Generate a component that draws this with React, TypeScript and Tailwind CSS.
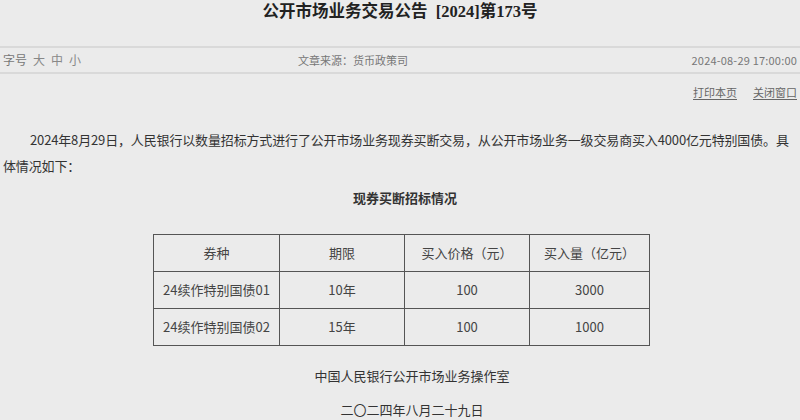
import React from "react";

const rows = [
  ["24续作特别国债01", "10年", "100", "3000"],
  ["24续作特别国债02", "15年", "100", "1000"],
];

export default function App() {
  const cell = "border border-[#555] text-center align-middle h-[37px] p-0";
  return (
    <div
      className="w-[800px] h-[420px] overflow-hidden bg-[#ebebeb] text-[#333]"
      style={{ fontFamily: '"Liberation Serif", "Noto Sans CJK SC", serif' }}
    >
      <h1 className="h-[24px] leading-[24px] text-center text-[16.5px] font-bold text-[#222]">
        公开市场业务交易公告&nbsp; [2024]第173号
      </h1>

      <div
        className="mt-[22px] h-[28px] border-y-2 border-[#d9d9d9] flex items-center px-[3px] text-[#777]"
        style={{ fontFamily: '"Noto Sans CJK SC", sans-serif' }}
      >
        <div className="w-[295px] flex gap-[6px] text-[12px] leading-[24px]">
          <span>字号</span>
          <span className="text-[#888]">大</span>
          <span className="text-[#888]">中</span>
          <span className="text-[#888]">小</span>
        </div>
        <div className="text-[11px] leading-[24px]">文章来源：货币政策司</div>
        <div className="ml-auto text-[11px] leading-[24px] tracking-[0.2px]">2024-08-29 17:00:00</div>
      </div>

      <div
        className="mt-[9px] flex justify-end gap-[16px] pr-[3px] text-[11px] leading-[18px] text-[#666]"
        style={{ fontFamily: '"Noto Sans CJK SC", sans-serif' }}
      >
        <span className="underline underline-offset-2">打印本页</span>
        <span className="underline underline-offset-2">关闭窗口</span>
      </div>

      <p
        className="mt-[26px] px-[3px] text-[13px] leading-[26px] indent-[27px] tracking-[-0.15px] text-[#333]"
        style={{ fontFamily: '"Noto Sans CJK SC", sans-serif' }}
      >
        2024年8月29日，人民银行以数量招标方式进行了公开市场业务现券买断交易，从公开市场业务一级交易商买入4000亿元特别国债。具体情况如下：
      </p>

      <div
        className="mt-[9px] text-center text-[13px] leading-[20px] font-bold text-[#333] pl-[10px]"
        style={{ fontFamily: '"Noto Sans CJK SC", sans-serif' }}
      >
        现券买断招标情况
      </div>

      <table
        className="mt-[26px] ml-[153px] w-[496px] border-collapse table-fixed text-[13px] text-[#444]"
        style={{ fontFamily: '"Noto Sans CJK SC", sans-serif' }}
      >
        <colgroup>
          <col className="w-[126px]" />
          <col className="w-[125px]" />
          <col className="w-[125px]" />
          <col className="w-[120px]" />
        </colgroup>
        <tbody>
          <tr>
            <td className={cell}>券种</td>
            <td className={cell}>期限</td>
            <td className={cell}>买入价格（元）</td>
            <td className={cell}>买入量（亿元）</td>
          </tr>
          {rows.map((r) => (
            <tr key={r[0]}>
              {r.map((c, i) => (
                <td key={i} className={cell}>
                  {c}
                </td>
              ))}
            </tr>
          ))}
        </tbody>
      </table>

      <div
        className="mt-[20px] text-center text-[13px] leading-[20px] text-[#333] pl-[24px]"
        style={{ fontFamily: '"Noto Sans CJK SC", sans-serif' }}
      >
        中国人民银行公开市场业务操作室
      </div>
      <div
        className="mt-[14px] text-center text-[13px] leading-[20px] text-[#333] pl-[24px]"
        style={{ fontFamily: '"Noto Sans CJK SC", sans-serif' }}
      >
        二〇二四年八月二十九日
      </div>
    </div>
  );
}
